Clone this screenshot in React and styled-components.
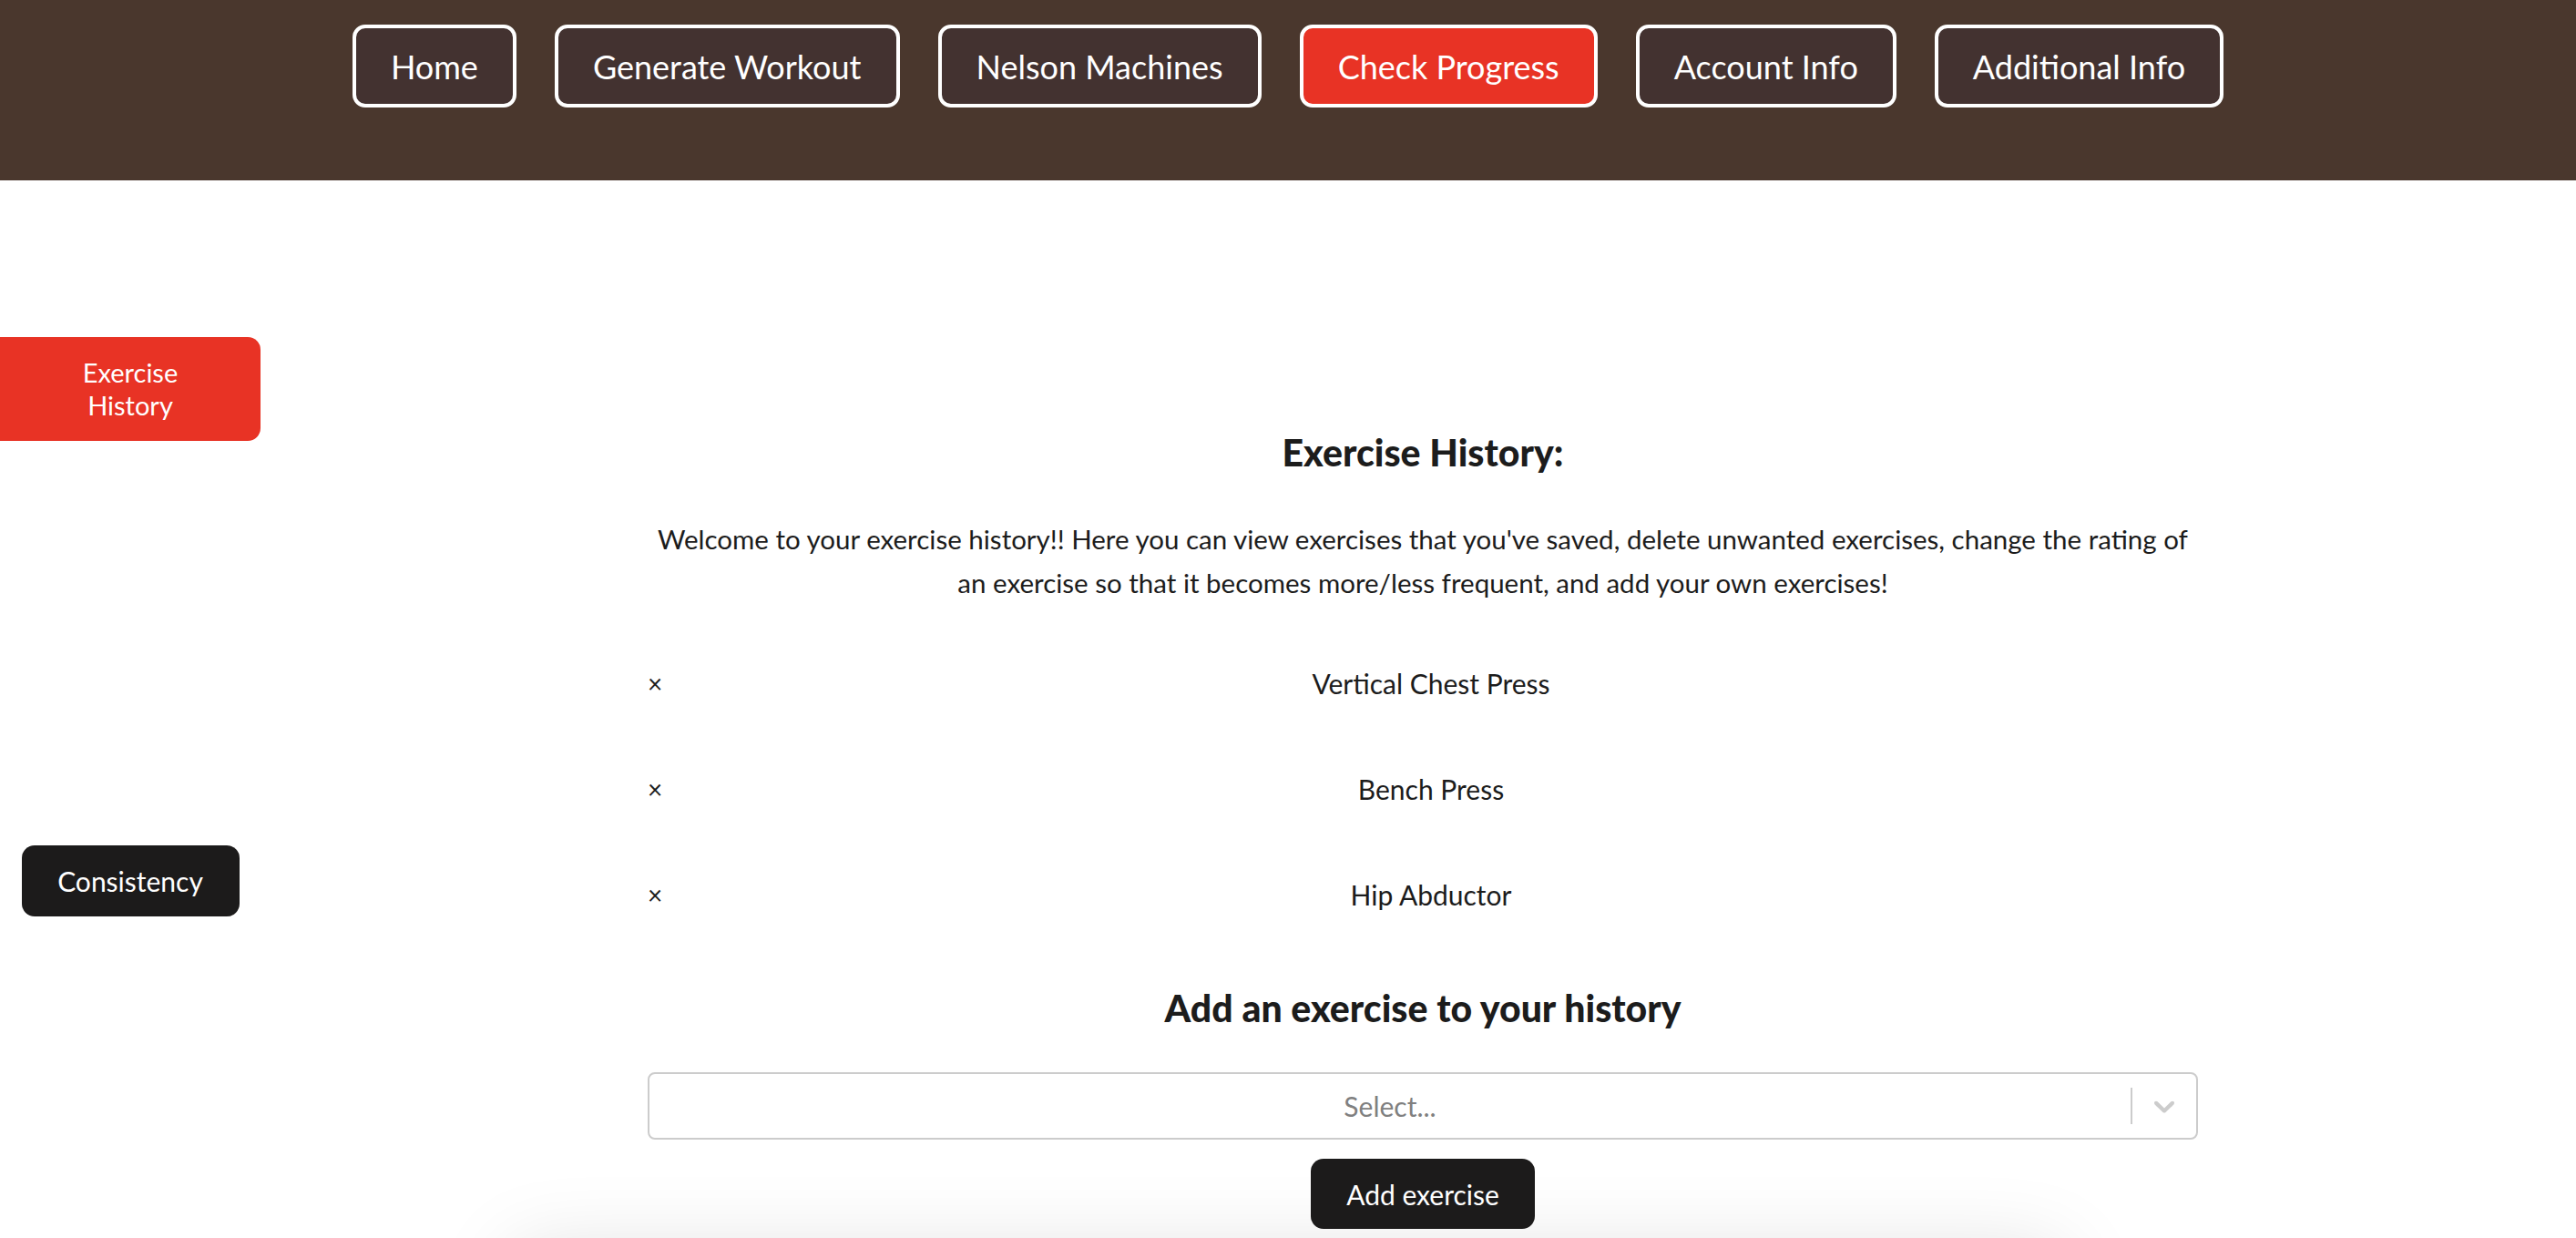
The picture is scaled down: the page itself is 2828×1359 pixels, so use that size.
import styled, { createGlobalStyle } from "styled-components";

const GlobalStyle = createGlobalStyle`
  body {
    margin: 0;
    background: #fff;
    color: #1c1c1c;
    font-family: "Gill Sans", Lato, "Open Sans", sans-serif;
  }
`;

const Header = styled.header`
  height: 198px;
  background-color: #4a372d;
  display: flex;
  justify-content: center;
  align-items: flex-start;
  gap: 42px;
  padding-top: 27px;
  box-sizing: border-box;
`;

const NavButton = styled.button`
  height: 91px;
  padding: 0 38px;
  border: 4px solid #fff;
  border-radius: 14px;
  background-color: ${(p) => (p.$active ? "#e83325" : "#433230")};
  color: #fff;
  font-family: inherit;
  font-size: 36px;
  cursor: pointer;
`;

const Body = styled.div`
  display: flex;
`;

const Sidebar = styled.aside`
  width: 286px;
  flex-shrink: 0;
  display: flex;
  flex-direction: column;
  align-items: center;
  gap: 444px;
  padding-top: 172px;
`;

const SideButton = styled.button`
  width: ${(p) => (p.$active ? "286px" : "239px")};
  height: ${(p) => (p.$active ? "114px" : "78px")};
  padding: ${(p) => (p.$active ? "0 60px" : "0")};
  border: none;
  border-radius: ${(p) => (p.$active ? "0 14px 14px 0" : "14px")};
  background-color: ${(p) => (p.$active ? "#e83325" : "#1c1b1b")};
  color: #fff;
  font-family: inherit;
  font-size: ${(p) => (p.$active ? "29px" : "30px")};
  line-height: 36px;
  cursor: pointer;
`;

const Main = styled.main`
  flex: 1;
  padding: 276px 0 0 10px;
`;

const Content = styled.section`
  width: 1702px;
  margin: 0 auto;
  display: flex;
  flex-direction: column;
  align-items: stretch;
`;

const Heading = styled.h2`
  margin: ${(p) => p.$top || "0"} 0 0;
  font-size: 41px;
  font-weight: 900;
  line-height: 46px;
  text-align: center;
`;

const Intro = styled.p`
  margin: 48px 0 0;
  font-size: 29.5px;
  line-height: 48px;
  text-align: center;
`;

const List = styled.ul`
  list-style: none;
  margin: 68px 0 0;
  padding: 0;
  display: flex;
  flex-direction: column;
  gap: 80px;
`;

const Row = styled.li`
  display: flex;
  align-items: center;
  height: 36px;
  font-size: 30px;
`;

const Remove = styled.span`
  width: 18px;
  font-size: 28px;
  cursor: pointer;
`;

const Name = styled.span`
  flex: 1;
  text-align: center;
`;

const Select = styled.div`
  margin-top: 47px;
  height: 74px;
  border: 2px solid #ccc;
  border-radius: 8px;
  box-sizing: border-box;
  display: flex;
  align-items: center;
`;

const Placeholder = styled.span`
  flex: 1;
  text-align: center;
  color: #808080;
  font-size: 30px;
`;

const Indicators = styled.div`
  display: flex;
  align-items: center;
  height: 100%;
`;

const Separator = styled.span`
  width: 2px;
  height: 40px;
  background-color: #ccc;
`;

const Chevron = styled.span`
  display: flex;
  padding: 0 16px;
  color: #ccc;
`;

const AddButton = styled.button`
  align-self: center;
  margin-top: 21px;
  width: 246px;
  height: 77px;
  border: none;
  border-radius: 14px;
  background-color: #1c1b1b;
  color: #fff;
  font-family: inherit;
  font-size: 30px;
  cursor: pointer;
`;

const ChartCard = styled.div`
  width: 1700px;
  height: 420px;
  margin: 25px auto 0;
  background: #fff;
  border-radius: 12px;
  box-shadow: 0 0 90px rgba(0, 0, 0, 0.13);
`;

const navItems = [
  "Home",
  "Generate Workout",
  "Nelson Machines",
  "Check Progress",
  "Account Info",
  "Additional Info",
];

const history = ["Vertical Chest Press", "Bench Press", "Hip Abductor"];

export default function App() {
  return (
    <>
      <GlobalStyle />
      <Header>
        {navItems.map((item) => (
          <NavButton key={item} $active={item === "Check Progress"}>
            {item}
          </NavButton>
        ))}
      </Header>

      <Body>
        <Sidebar>
          <SideButton $active>Exercise History</SideButton>
          <SideButton>Consistency</SideButton>
        </Sidebar>

        <Main>
          <Content>
            <Heading>Exercise History:</Heading>
            <Intro>
              Welcome to your exercise history!! Here you can view exercises
              that you've saved, delete unwanted exercises, change the rating of
              an exercise so that it becomes more/less frequent, and add your own
              exercises!
            </Intro>

            <List>
              {history.map((name) => (
                <Row key={name}>
                  <Remove>×</Remove>
                  <Name>{name}</Name>
                </Row>
              ))}
            </List>

            <Heading $top="84px">Add an exercise to your history</Heading>

            <Select>
              <Placeholder>Select...</Placeholder>
              <Indicators>
                <Separator />
                <Chevron>
                  <svg width="38" height="38" viewBox="0 0 20 20" fill="currentColor">
                    <path d="M4.516 7.548c0.436-0.446 1.043-0.481 1.576 0l3.908 3.747 3.908-3.747c0.533-0.481 1.141-0.446 1.574 0 0.436 0.445 0.408 1.197 0 1.615-0.406 0.418-4.695 4.502-4.695 4.502-0.217 0.223-0.502 0.335-0.787 0.335s-0.57-0.112-0.789-0.335c0 0-4.287-4.084-4.695-4.502s-0.436-1.17 0-1.615z" />
                  </svg>
                </Chevron>
              </Indicators>
            </Select>

            <AddButton>Add exercise</AddButton>
          </Content>
        </Main>
      </Body>

      <ChartCard />
    </>
  );
}
